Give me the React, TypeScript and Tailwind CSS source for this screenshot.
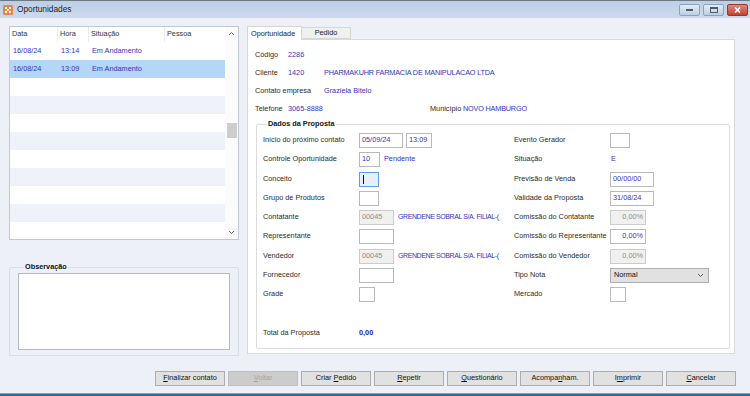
import React from "react";

const font = "font-['Liberation_Sans',Arial,sans-serif]";
const blue = "text-[#3434c0]";

function Chevron({ up = false }: { up?: boolean }) {
  return (
    <svg width="7" height="5" viewBox="0 0 7 5" className={up ? "rotate-180" : ""}>
      <polyline points="1,1 3.5,3.5 6,1" fill="none" stroke="#606060" strokeWidth="1" />
    </svg>
  );
}

function AppIcon() {
  return (
    <svg width="10" height="10" viewBox="0 0 10 10">
      <rect width="10" height="10" rx="1" fill="#f2823f" />
      <rect x="2" y="2" width="2" height="2" fill="#fff" />
      <rect x="6" y="2" width="2" height="2" fill="#fff" />
      <rect x="4" y="4" width="2" height="2" fill="#fff" />
      <rect x="2" y="6" width="2" height="2" fill="#fff" />
      <rect x="6" y="6" width="2" height="2" fill="#fff" />
    </svg>
  );
}

function TitleBar() {
  return (
    <div className="h-[18px] flex items-center border-t border-[#6f7985] bg-gradient-to-b from-[#bccfe7] to-[#ccdaed]">
      <div className="ml-[3px] mt-[1px]">
        <AppIcon />
      </div>
      <span className="ml-[4px] text-[8.3px] text-[#1b1b1b]">Oportunidades</span>
      <div className="ml-auto mr-[2px] flex gap-[3px]">
        <div className="w-[21px] h-[12px] rounded-[2px] border border-[#8ba2bf] bg-gradient-to-b from-[#e3ecf7] to-[#bccde3] flex items-center justify-center">
          <div className="w-[7px] h-[2px] bg-[#4d5b6d]" />
        </div>
        <div className="w-[21px] h-[12px] rounded-[2px] border border-[#8ba2bf] bg-gradient-to-b from-[#e3ecf7] to-[#bccde3] flex items-center justify-center">
          <div className="w-[8px] h-[6px] border border-[#4d5b6d] border-t-2" />
        </div>
        <div className="w-[21px] h-[12px] rounded-[2px] border border-[#8e3a33] bg-gradient-to-b from-[#e0877a] to-[#c2402f] flex items-center justify-center">
          <svg width="7" height="6" viewBox="0 0 7 6">
            <path d="M1 0.5 L6 5.5 M6 0.5 L1 5.5" stroke="#fff" strokeWidth="1.6" />
          </svg>
        </div>
      </div>
    </div>
  );
}

const rows = [
  { data: "16/08/24", hora: "13:14", sit: "Em Andamento" },
  { data: "16/08/24", hora: "13:09", sit: "Em Andamento", sel: true },
  {}, {}, {}, {}, {}, {}, {}, {}, {},
] as { data?: string; hora?: string; sit?: string; sel?: boolean }[];

function HistoryList() {
  return (
    <div className="h-[214px] border border-[#c3c7cf] bg-white flex overflow-hidden">
      <div className="flex-1 flex flex-col">
        <div className="h-[15px] shrink-0 flex items-center text-[#333]">
          <div className="w-[48px] h-full pl-[2px] flex items-center border-r border-[#ececec]">Data</div>
          <div className="w-[31px] h-full pl-[2px] flex items-center border-r border-[#ececec]">Hora</div>
          <div className="w-[76px] h-full pl-[2px] flex items-center border-r border-[#ececec]">Situação</div>
          <div className="flex-1 h-full pl-[2px] flex items-center">Pessoa</div>
        </div>
        {rows.map((r, i) => (
          <div
            key={i}
            className={`h-[18px] shrink-0 flex items-center ${blue} ${
              r.sel ? "bg-[#b4d6f7]" : i % 2 === 1 ? "bg-[#f0f2f9]" : "bg-white"
            }`}
          >
            <div className="w-[48px] pl-[3px]">{r.data}</div>
            <div className="w-[31px] pl-[3px]">{r.hora}</div>
            <div className="w-[76px] pl-[3px]">{r.sit}</div>
          </div>
        ))}
      </div>
      <div className="w-[13px] bg-[#fbfbfb] flex flex-col items-center">
        <div className="h-[13px] flex items-center justify-center">
          <Chevron up />
        </div>
        <div className="mt-[83px] w-[10px] h-[15px] bg-[#cdcdcd]" />
        <div className="mt-auto h-[13px] flex items-center justify-center">
          <Chevron />
        </div>
      </div>
    </div>
  );
}

function Observacao() {
  return (
    <fieldset className="mt-[22px] h-[94px] border border-[#dadde3] rounded-[2px] pl-[8px] pb-[5px]">
      <legend className="ml-[6px] px-[1px] font-bold text-[#111] leading-[10px]">Observação</legend>
      <div className="mt-[1px] w-[212px] h-[77px] border border-[#b5b8bd] bg-white" />
    </fieldset>
  );
}

function Box({
  w,
  children,
  gray = false,
  right = false,
  focus = false,
}: {
  w: string;
  children?: React.ReactNode;
  gray?: boolean;
  right?: boolean;
  focus?: boolean;
}) {
  return (
    <div
      className={`${w} h-[15px] shrink-0 border flex items-center px-[2px] ${right ? "justify-end" : ""} ${
        gray
          ? "bg-[#f0f0f0] border-[#cbcbcb] text-[#8c8c8c]"
          : focus
          ? "bg-[#e6f0fb] border-[#5c9de3]"
          : `bg-white border-[#b9b9b9] ${blue}`
      }`}
    >
      {children}
    </div>
  );
}

function FormRow({ label, children }: { label: string; children?: React.ReactNode }) {
  return (
    <div className="h-[19.25px] flex items-center">
      <div className="w-[96px] shrink-0 text-[#2a2a2a] whitespace-nowrap">{label}</div>
      {children}
    </div>
  );
}

function Grendene() {
  return (
    <div className={`ml-[4px] w-[102px] whitespace-nowrap text-[7px] tracking-[-0.4px] ${blue}`}>
      GRENDENE SOBRAL S/A. FILIAL-(
    </div>
  );
}

function DadosProposta() {
  return (
    <fieldset className="mt-[1px] ml-[1px] border border-[#dcdcdc] rounded-[2px] pl-[6px] pt-[2px] pb-[4px]">
      <legend className="ml-[4px] px-[1px] font-bold text-[#111] leading-[10px]">Dados da Proposta</legend>
      <div className="flex">
        <div className="w-[251px] flex flex-col">
          <FormRow label="Início do próximo contato">
            <Box w="w-[44px]">05/09/24</Box>
            <div className="ml-[3px]">
              <Box w="w-[26px]">13:09</Box>
            </div>
          </FormRow>
          <FormRow label="Controle Oportunidade">
            <Box w="w-[21px]">10</Box>
            <span className={`ml-[4px] ${blue}`}>Pendente</span>
          </FormRow>
          <FormRow label="Conceito">
            <Box w="w-[20px]" focus>
              <div className="ml-[1px] w-[1px] h-[9px] bg-[#111]" />
            </Box>
          </FormRow>
          <FormRow label="Grupo de Produtos">
            <Box w="w-[20px]" />
          </FormRow>
          <FormRow label="Contatante">
            <Box w="w-[35px]" gray>00045</Box>
            <Grendene />
          </FormRow>
          <FormRow label="Representante">
            <Box w="w-[35px]" />
          </FormRow>
          <FormRow label="Vendedor">
            <Box w="w-[35px]" gray>00045</Box>
            <Grendene />
          </FormRow>
          <FormRow label="Fornecedor">
            <Box w="w-[35px]" />
          </FormRow>
          <FormRow label="Grade">
            <Box w="w-[16px]" />
          </FormRow>
          <div className="mt-[20px]">
            <FormRow label="Total da Proposta">
              <span className="font-bold text-[#1f1fa8]">0,00</span>
            </FormRow>
          </div>
        </div>
        <div className="flex-1 flex flex-col">
          <FormRow label="Evento Gerador">
            <Box w="w-[20px]" />
          </FormRow>
          <FormRow label="Situação">
            <span className={`ml-[1px] ${blue}`}>E</span>
          </FormRow>
          <FormRow label="Previsão de Venda">
            <Box w="w-[44px]">00/00/00</Box>
          </FormRow>
          <FormRow label="Validade da Proposta">
            <Box w="w-[44px]">31/08/24</Box>
          </FormRow>
          <FormRow label="Comissão do Contatante">
            <Box w="w-[36px]" gray right>0,00%</Box>
          </FormRow>
          <FormRow label="Comissão do Representante">
            <Box w="w-[36px]" right>0,00%</Box>
          </FormRow>
          <FormRow label="Comissão do Vendedor">
            <Box w="w-[36px]" gray right>0,00%</Box>
          </FormRow>
          <FormRow label="Tipo Nota">
            <div className="w-[99px] h-[15px] border border-[#adadad] bg-[#e1e1e1] flex items-center pl-[3px] pr-[4px] text-[#111]">
              Normal
              <div className="ml-auto">
                <Chevron />
              </div>
            </div>
          </FormRow>
          <FormRow label="Mercado">
            <Box w="w-[16px]" />
          </FormRow>
        </div>
      </div>
    </fieldset>
  );
}

function InfoRow({ children }: { children: React.ReactNode }) {
  return <div className="h-[18px] flex items-center whitespace-nowrap">{children}</div>;
}

function OportunidadePanel() {
  return (
    <div className="w-[488px] ml-[8px] flex flex-col">
      <div className="h-[14px] flex items-end">
        <div className="w-[55px] h-[14px] border border-b-0 border-[#d6d6d6] bg-white -mb-[1px] relative z-10 pl-[3px] pt-[2px] text-[#1b1b1b]">
          Oportunidade
        </div>
        <div className="w-[49px] h-[12px] border border-l-0 border-[#d6d6d6] bg-[#f0f0f0] flex items-center justify-center text-[#1b1b1b]">
          Pedido
        </div>
      </div>
      <div className="h-[315px] border border-[#d9d9d9] bg-white pl-[7px] pr-[4px] pt-[6px]">
        <InfoRow>
          <span className="w-[33px] text-[#2a2a2a]">Código</span>
          <span className={blue}>2286</span>
        </InfoRow>
        <InfoRow>
          <span className="w-[33px] text-[#2a2a2a]">Cliente</span>
          <span className={`w-[36px] ${blue}`}>1420</span>
          <span className={`tracking-[-0.2px] ${blue}`}>PHARMAKUHR FARMACIA DE MANIPULACAO LTDA</span>
        </InfoRow>
        <InfoRow>
          <span className="w-[69px] text-[#2a2a2a]">Contato empresa</span>
          <span className={blue}>Graziela Bitelo</span>
        </InfoRow>
        <InfoRow>
          <span className="w-[33px] text-[#2a2a2a]">Telefone</span>
          <span className={`w-[142px] ${blue}`}>3065-8888</span>
          <span className="w-[33px] text-[#2a2a2a]">Município</span>
          <span className={`tracking-[-0.2px] ${blue}`}>NOVO HAMBURGO</span>
        </InfoRow>
        <DadosProposta />
      </div>
    </div>
  );
}

function Btn({ pre = "", u, post = "", disabled = false }: { pre?: string; u: string; post?: string; disabled?: boolean }) {
  return (
    <div
      className={`w-[70px] h-[15px] border flex items-center justify-center ${
        disabled ? "bg-[#cccccc] border-[#bfbfbf] text-[#a3a3a3]" : "bg-[#e1e1e1] border-[#adadad] text-[#111]"
      }`}
    >
      <span className="whitespace-pre">
        {pre}
        <span className="underline underline-offset-[1px]">{u}</span>
        {post}
      </span>
    </div>
  );
}

export default function App() {
  return (
    <div className={`w-[750px] h-[396px] overflow-hidden bg-[#eef0f7] flex flex-col text-[7.3px] ${font}`}>
      <TitleBar />
      <div className="h-[353px] flex items-start pt-[7px] pl-[9px]">
        <div className="w-[230px] mt-[1px] flex flex-col">
          <HistoryList />
          <Observacao />
        </div>
        <OportunidadePanel />
      </div>
      <div className="h-[15px] flex justify-end gap-[3px] pr-[14px]">
        <Btn u="F" post="inalizar contato" />
        <Btn u="V" post="oltar" disabled />
        <Btn pre="Criar " u="P" post="edido" />
        <Btn u="R" post="epetir" />
        <Btn u="Q" post="uestionário" />
        <Btn pre="Acompa" u="n" post="ham." />
        <Btn pre="I" u="m" post="primir" />
        <Btn u="C" post="ancelar" />
      </div>
      <div className="h-[7px]" />
      <div className="h-[1px] bg-[#7fa6c6]" />
      <div className="h-[2px] bg-[#2e6a92]" />
    </div>
  );
}
